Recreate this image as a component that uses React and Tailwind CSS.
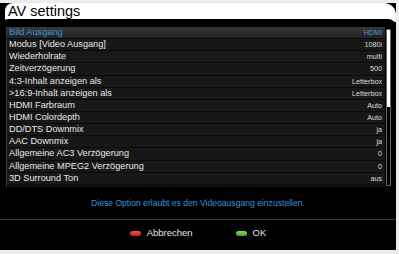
import React from 'react';

const rows = [
  ['Bild Ausgang', 'HDMI'],
  ['Modus [Video Ausgang]', '1080i'],
  ['Wiederholrate', 'multi'],
  ['Zeitverzögerung', '500'],
  ['4:3-Inhalt anzeigen als', 'Letterbox'],
  ['>16:9-Inhalt anzeigen als', 'Letterbox'],
  ['HDMI Farbraum', 'Auto'],
  ['HDMI Colordepth', 'Auto'],
  ['DD/DTS Downmix', 'ja'],
  ['AAC Downmix', 'ja'],
  ['Allgemeine AC3 Verzögerung', '0'],
  ['Allgemeine MPEG2 Verzögerung', '0'],
  ['3D Surround Ton', 'aus'],
];

const App = () => {
  return (
    <div className="w-[399px] h-[254px] bg-[#ececec] pt-[3px] overflow-hidden font-['Liberation_Sans',Arial,sans-serif]">
      <div className="w-[396px] h-[247px] bg-black rounded-tl-[3px] rounded-b-[9px] flex flex-col">
        {/* title bar */}
        <div className="flex h-[19px] shrink-0">
          <div className="w-[5px] bg-black" />
          <div className="flex-1 bg-white rounded-tl-[8px] rounded-tr-[12px] pl-[3px] text-[14.5px] leading-[16px] text-black">
            AV settings
          </div>
        </div>

        {/* body */}
        <div className="-mt-[3px] bg-black rounded-t-[8px] flex-1 flex flex-col pt-[8px]">
          {/* list */}
          <div className="flex ml-[6px] mr-[5px] h-[160px]">
            <div className="flex-1 border-l border-[#3a3a3a] bg-[#101010]">
              {rows.map(([label, value], i) => (
                <div
                  key={i}
                  className={
                    i === 0
                      ? 'flex items-center justify-between h-[12.15px] pl-[2px] pr-[3px] bg-gradient-to-b from-[#383838] to-[#222] border-b border-[#0a0a0a]'
                      : 'flex items-center justify-between h-[12.15px] pl-[2px] pr-[3px] bg-[#181818] border-b border-[#0a0a0a]'
                  }
                >
                  <span className={i === 0 ? 'text-[9.2px] leading-none text-[#3c95d6]' : 'text-[9.2px] leading-none text-[#e6e6e6]'}>
                    {label}
                  </span>
                  <span className={i === 0 ? 'text-[7.2px] leading-none text-[#3c95d6]' : 'text-[7.2px] leading-none text-[#dcdcdc]'}>
                    {value}
                  </span>
                </div>
              ))}
            </div>
            {/* scrollbar */}
            <div className="w-[5px] ml-[1px] mt-[2px] mb-[1px] border border-[#6a6a6a] rounded-[1px] bg-black flex flex-col">
              <div className="h-[77px] bg-white" />
            </div>
          </div>

          {/* info */}
          <div className="h-[32px] flex items-center justify-center text-[8.6px] text-[#3c95d6]">
            Diese Option erlaubt es den Videoausgang einzustellen.
          </div>

          <div className="h-px bg-[#3a3a3a]" />

          {/* buttons */}
          <div className="flex items-center justify-center h-[27px] text-[9.5px] text-[#e6e6e6]">
            <div className="flex items-center">
              <span className="w-[11px] h-[5px] rounded-full bg-gradient-to-b from-[#f05050] to-[#b81c1c] mr-[6px]" />
              Abbrechen
            </div>
            <div className="flex items-center ml-[43px]">
              <span className="w-[11px] h-[5px] rounded-full bg-gradient-to-b from-[#8de060] to-[#3da01c] mr-[6px]" />
              OK
            </div>
          </div>
        </div>
      </div>
    </div>
  );
};

export default App;
